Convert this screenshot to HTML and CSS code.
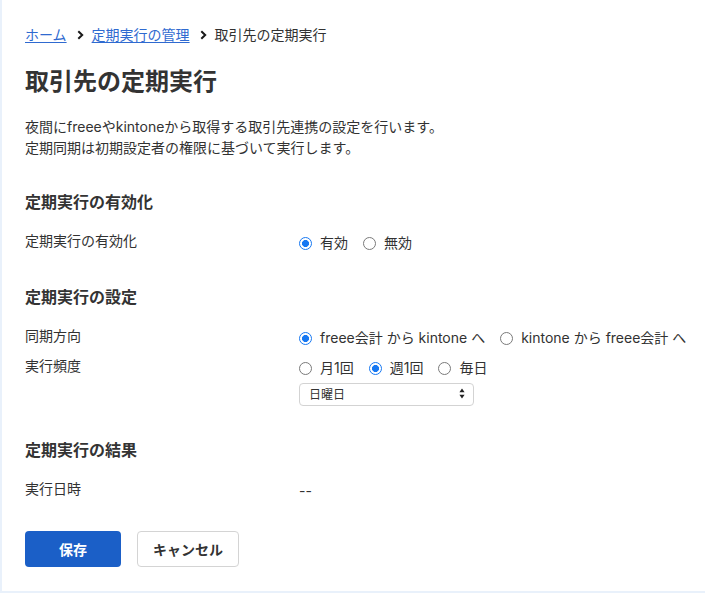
FILE: index.html
```html
<!DOCTYPE html>
<html lang="ja">
<head>
<meta charset="utf-8">
<title>取引先の定期実行</title>
<link rel="stylesheet" href="styles.css">
</head>
<body>
<div class="panel">
  <nav class="crumbs">
    <a href="#">ホーム</a>
    <svg class="chev" width="7" height="10" viewBox="0 0 7 10"><path d="M1.3 1.2 L5.2 5 L1.3 8.8" fill="none" stroke="#1a1a1a" stroke-width="2"/></svg>
    <a href="#">定期実行の管理</a>
    <svg class="chev" width="7" height="10" viewBox="0 0 7 10"><path d="M1.3 1.2 L5.2 5 L1.3 8.8" fill="none" stroke="#1a1a1a" stroke-width="2"/></svg>
    <span>取引先の定期実行</span>
  </nav>

  <h1 class="title">取引先の定期実行</h1>
  <p class="lead">夜間にfreeeやkintoneから取得する取引先連携の設定を行います。<br>定期同期は初期設定者の権限に基づいて実行します。</p>

  <h2 class="sec">定期実行の有効化</h2>
  <div class="field">
    <div class="label">定期実行の有効化</div>
    <div class="value">
      <label class="opt"><input type="radio" name="en" checked><span>有効</span></label>
      <label class="opt"><input type="radio" name="en"><span>無効</span></label>
    </div>
  </div>

  <h2 class="sec">定期実行の設定</h2>
  <div class="field">
    <div class="label">同期方向</div>
    <div class="value">
      <label class="opt"><input type="radio" name="dir" checked><span>freee会計 から kintone へ</span></label>
      <label class="opt"><input type="radio" name="dir"><span>kintone から freee会計 へ</span></label>
    </div>
  </div>
  <div class="field field-tight">
    <div class="label">実行頻度</div>
    <div class="value value-col">
      <div class="opts">
        <label class="opt"><input type="radio" name="fr"><span>月1回</span></label>
        <label class="opt"><input type="radio" name="fr" checked><span>週1回</span></label>
        <label class="opt"><input type="radio" name="fr"><span>毎日</span></label>
      </div>
      <div class="select-wrap">
        <select class="select">
          <option>日曜日</option>
        </select>
        <svg class="arrows" width="6" height="11" viewBox="0 0 6 11"><path d="M3 0.5 L5.6 4.2 H0.4 Z M3 10.5 L5.6 6.8 H0.4 Z" fill="#222"/></svg>
      </div>
    </div>
  </div>

  <h2 class="sec sec-wide">定期実行の結果</h2>
  <div class="field">
    <div class="label">実行日時</div>
    <div class="value">--</div>
  </div>

  <div class="actions">
    <button class="btn btn-primary">保存</button>
    <button class="btn btn-secondary">キャンセル</button>
  </div>
</div>
</body>
</html>
```

FILE: styles.css
```css
* { box-sizing: border-box; }

html, body {
  margin: 0;
  padding: 0;
}

body {
  background: #e9f1fb;
  font-family: Inter, "Noto Sans CJK JP", sans-serif;
  color: #323232;
  font-size: 14px;
  width: 705px;
  height: 593px;
  overflow: hidden;
}

.panel {
  margin-left: 2px;
  height: 591px;
  background: #fff;
  padding: 25px 0 0 23px;
}

.crumbs {
  display: flex;
  align-items: center;
  height: 20px;
  line-height: 20px;
  font-size: 14px;
}

.crumbs a {
  color: #2f6ad0;
  text-decoration: underline;
  text-underline-offset: 2px;
}

.chev {
  margin: 0 8px 0 10px;
}

.title {
  margin: 21px 0 0;
  font-size: 24px;
  line-height: 32px;
  font-weight: 700;
  color: #333;
}

.lead {
  margin: 18px 0 0;
  line-height: 21px;
}

.sec {
  margin: 32px 0 0;
  font-size: 16px;
  line-height: 24px;
  font-weight: 700;
  color: #333;
}

.sec-wide {
  margin-top: 33px;
}

.field {
  display: grid;
  grid-template-columns: 274px 1fr;
  margin-top: 15px;
  line-height: 24px;
}

.field-tight {
  margin-top: 6px;
}

.value {
  display: flex;
  align-items: center;
  padding-top: 2px;
  height: 26px;
  margin-bottom: -2px;
}

.value-col {
  flex-direction: column;
  align-items: flex-start;
  height: auto;
  margin-bottom: 0;
}

.opts {
  display: flex;
  height: 24px;
  align-items: center;
}

.opt {
  display: inline-flex;
  align-items: center;
  margin-right: 15px;
  white-space: nowrap;
}

.opt input {
  -webkit-appearance: none;
  appearance: none;
  width: 13px;
  height: 13px;
  margin: 0 8px 0 0;
  border: 1px solid #7a7a7a;
  border-radius: 50%;
  background: #fff;
}

.opt input:checked {
  border: 1.5px solid #1778f2;
  background: radial-gradient(circle, #1778f2 0 3.2px, #fff 3.8px);
}

.select-wrap {
  position: relative;
  margin-top: 2px;
  width: 175px;
  height: 23px;
}

.select {
  -webkit-appearance: none;
  appearance: none;
  width: 175px;
  height: 23px;
  padding: 0 0 0 9px;
  border: 1px solid #d3d3d3;
  border-radius: 4px;
  background: #fff;
  font-family: Inter, "Noto Sans CJK JP", sans-serif;
  font-size: 12px;
  color: #333;
}

.arrows {
  position: absolute;
  right: 9px;
  top: 6px;
  pointer-events: none;
}

.actions {
  display: flex;
  gap: 16px;
  margin-top: 30px;
}

.btn {
  height: 36px;
  border-radius: 4px;
  font-family: Inter, "Noto Sans CJK JP", sans-serif;
  font-size: 14px;
  font-weight: 700;
  cursor: pointer;
}

.btn-primary {
  width: 96px;
  background: #1b5fc7;
  color: #fff;
  border: none;
}

.btn-secondary {
  width: 102px;
  background: #fff;
  color: #333;
  border: 1px solid #d4d4d4;
}
```
